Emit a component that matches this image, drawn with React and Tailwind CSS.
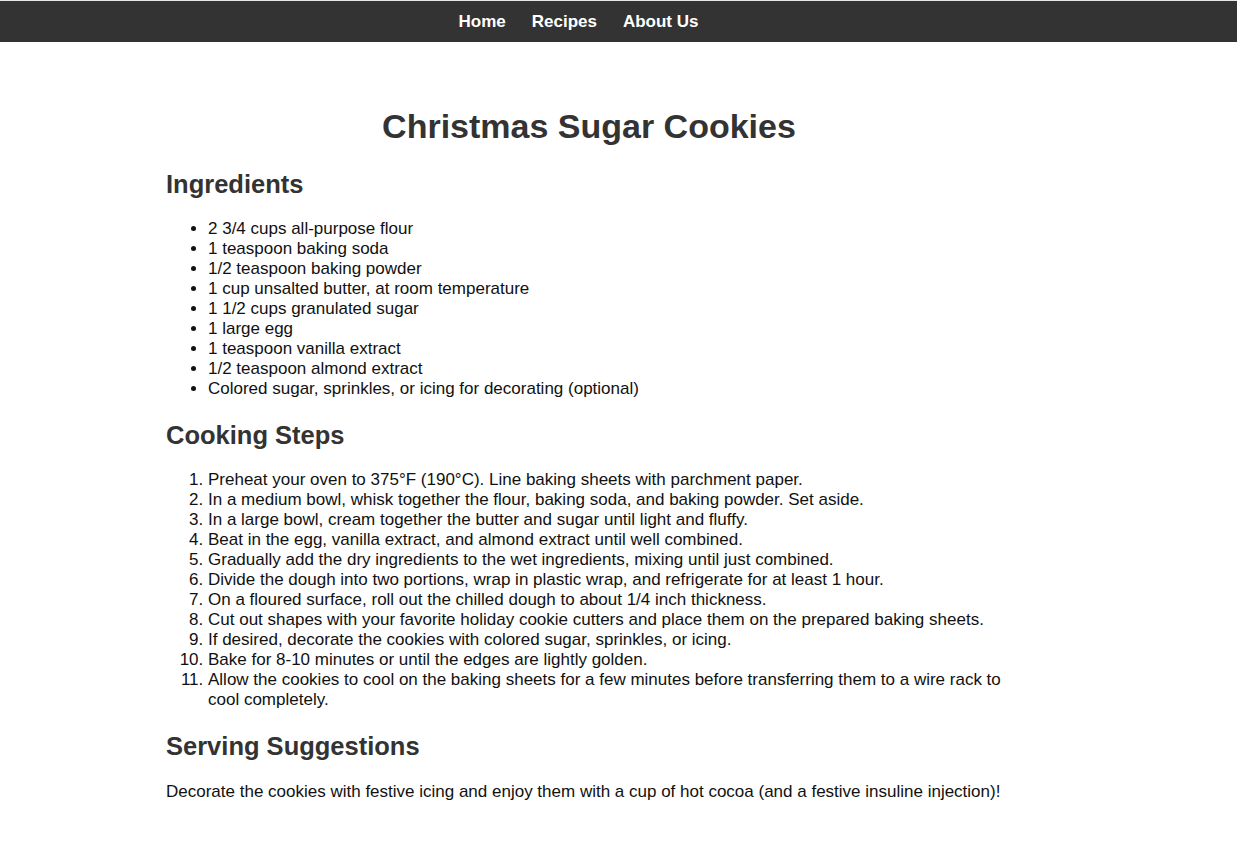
import React from "react";

const ingredients = [
  "2 3/4 cups all-purpose flour",
  "1 teaspoon baking soda",
  "1/2 teaspoon baking powder",
  "1 cup unsalted butter, at room temperature",
  "1 1/2 cups granulated sugar",
  "1 large egg",
  "1 teaspoon vanilla extract",
  "1/2 teaspoon almond extract",
  "Colored sugar, sprinkles, or icing for decorating (optional)",
];

const steps = [
  "Preheat your oven to 375°F (190°C). Line baking sheets with parchment paper.",
  "In a medium bowl, whisk together the flour, baking soda, and baking powder. Set aside.",
  "In a large bowl, cream together the butter and sugar until light and fluffy.",
  "Beat in the egg, vanilla extract, and almond extract until well combined.",
  "Gradually add the dry ingredients to the wet ingredients, mixing until just combined.",
  "Divide the dough into two portions, wrap in plastic wrap, and refrigerate for at least 1 hour.",
  "On a floured surface, roll out the chilled dough to about 1/4 inch thickness.",
  "Cut out shapes with your favorite holiday cookie cutters and place them on the prepared baking sheets.",
  "If desired, decorate the cookies with colored sugar, sprinkles, or icing.",
  "Bake for 8-10 minutes or until the edges are lightly golden.",
  "Allow the cookies to cool on the baking sheets for a few minutes before transferring them to a wire rack to cool completely.",
];

export default function App() {
  return (
    <div className="min-h-screen bg-white font-['Liberation_Sans',Arial,sans-serif] text-[17px] leading-[20px] text-[#111]">
      {/* NAV */}
      <div className="h-px bg-[#e8e8e8]" />
      <nav className="h-[41px] bg-[#333] flex items-center justify-center gap-[26px] pr-[80px]">
        <a href="#" className="text-white font-bold">Home</a>
        <a href="#" className="text-white font-bold">Recipes</a>
        <a href="#" className="text-white font-bold">About Us</a>
      </nav>

      {/* CONTENT */}
      <main className="ml-[166px] w-[846px] pt-[66px] pb-[40px]">
        <h1 className="text-center text-[34px] leading-[37px] font-bold text-[#333] mb-[25px]">
          Christmas Sugar Cookies
        </h1>

        <h2 className="text-[25.5px] leading-[28px] font-bold text-[#333] mb-[21px]">
          Ingredients
        </h2>
        <ul className="list-disc pl-[42px]">
          {ingredients.map((item) => (
            <li key={item}>{item}</li>
          ))}
        </ul>

        <h2 className="text-[25.5px] leading-[28px] font-bold text-[#333] mt-[22px] mb-[21px]">
          Cooking Steps
        </h2>
        <ol className="list-decimal pl-[42px]">
          {steps.map((step) => (
            <li key={step}>{step}</li>
          ))}
        </ol>

        <h2 className="text-[25.5px] leading-[28px] font-bold text-[#333] mt-[22px] mb-[22px]">
          Serving Suggestions
        </h2>
        <p>
          Decorate the cookies with festive icing and enjoy them with a cup of hot cocoa (and a festive insuline injection)!
        </p>
      </main>
    </div>
  );
}
